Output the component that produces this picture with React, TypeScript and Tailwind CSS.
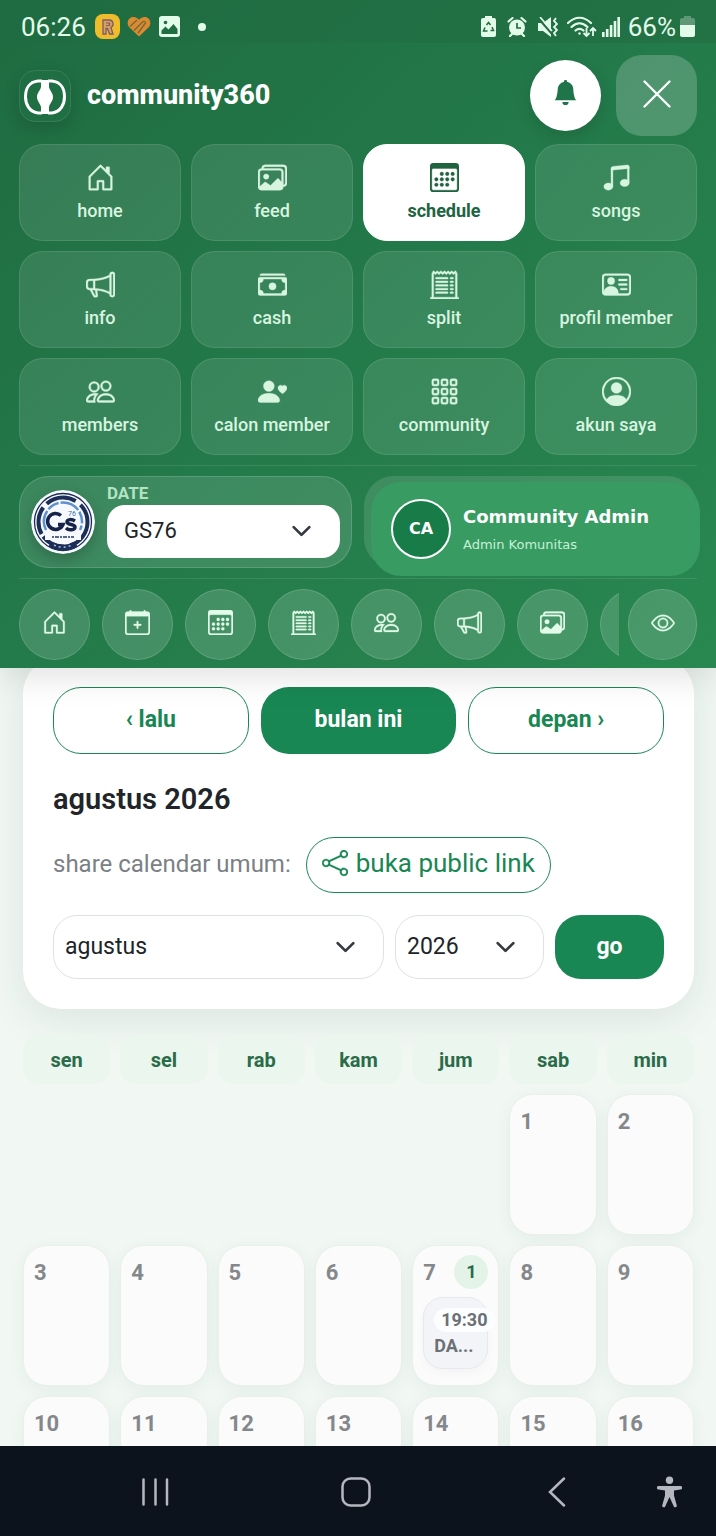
import type { IconType } from 'react-icons'
import {
  BsBellFill,
  BsCalendar3,
  BsCalendarPlus,
  BsCashStack,
  BsChevronDown,
  BsEye,
  BsGrid3X3Gap,
  BsHouseDoor,
  BsImages,
  BsMegaphone,
  BsMusicNoteBeamed,
  BsPeople,
  BsPersonCircle,
  BsPersonHeart,
  BsPersonVcard,
  BsReceiptCutoff,
  BsShare,
} from 'react-icons/bs'

const menu: { label: string; icon: IconType; active?: boolean }[] = [
  { label: 'home', icon: BsHouseDoor },
  { label: 'feed', icon: BsImages },
  { label: 'schedule', icon: BsCalendar3, active: true },
  { label: 'songs', icon: BsMusicNoteBeamed },
  { label: 'info', icon: BsMegaphone },
  { label: 'cash', icon: BsCashStack },
  { label: 'split', icon: BsReceiptCutoff },
  { label: 'profil member', icon: BsPersonVcard },
  { label: 'members', icon: BsPeople },
  { label: 'calon member', icon: BsPersonHeart },
  { label: 'community', icon: BsGrid3X3Gap },
  { label: 'akun saya', icon: BsPersonCircle },
]

const shortcuts: { label: string; icon: IconType | null }[] = [
  { label: 'home', icon: BsHouseDoor },
  { label: 'tambah jadwal', icon: BsCalendarPlus },
  { label: 'schedule', icon: BsCalendar3 },
  { label: 'split', icon: BsReceiptCutoff },
  { label: 'members', icon: BsPeople },
  { label: 'info', icon: BsMegaphone },
  { label: 'feed', icon: BsImages },
  { label: 'lainnya', icon: null },
]

const weekdays = ['sen', 'sel', 'rab', 'kam', 'jum', 'sab', 'min']
const days = Array.from({ length: 16 }, (_, i) => i + 1)
const events: Record<number, { time: string; title: string }[]> = {
  7: [{ time: '19:30', title: 'DA...' }],
}

function StatusBar() {
  return (
    <div className="flex h-[43px] items-center justify-between bg-[#216d42]/60 pl-[21px] pr-[21px] pt-2.5 text-[26px] leading-[30px] text-[#e3fbe9]">
      <div className="flex items-center">
        <span>06:26</span>
        <svg className="ml-[9px] size-[25px]" viewBox="0 0 25 25" aria-hidden="true">
          <rect width="25" height="25" rx="8" fill="#efbd2c" />
          <path
            d="M8 20V6h6.500a4 4 0 0 1 1.500 7.500L18 20h-3.500l-2-5.500H11V20z"
            fill="#d8a05a"
            stroke="#7d5a6b"
            strokeWidth="1.300"
          />
          <path d="M11 9h3.500v2.500H11" fill="none" stroke="#7d5a6b" strokeWidth="1.200" />
        </svg>
        <svg className="ml-[7px] h-[21px] w-6" viewBox="0 0 24 21" aria-hidden="true">
          <path
            d="M12 20.500 2 11C-.5 8 .5 2.500 4.500 1.200 8 .2 10.500 2 12 3.800 13.500 2 16 .2 19.500 1.200 23.500 2.500 24.500 8 22 11z"
            fill="#dc8a32"
          />
          <path d="m3 10.500 7-6.500M7 14.500l8.500-8.500q2.500-1.500 3 1L11 17" fill="none" stroke="#6f6a35" strokeWidth="1.300" />
        </svg>
        <svg className="ml-2 size-[21px]" viewBox="0 0 21 21" aria-hidden="true">
          <rect width="21" height="21" rx="3" fill="#e3fbe9" />
          <circle cx="6.500" cy="6.500" r="1.800" fill="#216d42" />
          <path d="m2.500 14.500 4-4 3 3 5-5.500 4 5v5h-16z" fill="#216d42" />
        </svg>
        <span className="ml-[18px] size-2 rounded-full bg-[#e3fbe9]" />
      </div>

      <div className="flex items-center">
        <svg className="h-[21px] w-[15px]" viewBox="0 0 15 21" aria-hidden="true">
          <path d="M4 2V0h7v2h2a2 2 0 0 1 2 2v15a2 2 0 0 1-2 2H2a2 2 0 0 1-2-2V4a2 2 0 0 1 2-2z" fill="#e3fbe9" />
          <path
            d="m5.500 9 2-2.500 2 2.500M11 11l1.500 3.500H9.500M6.500 15h-4L4 11.500"
            fill="none"
            stroke="#216d42"
            strokeWidth="1.500"
          />
        </svg>
        <svg className="ml-[11px] size-5" viewBox="0 0 20 20" aria-hidden="true">
          <circle cx="10" cy="10.500" r="8" fill="#e3fbe9" />
          <path d="m1.500 4.500 4-3.500m9 0 4 3.500M3 19l2.500-2.500M17 19l-2.500-2.500" stroke="#e3fbe9" strokeWidth="2.200" strokeLinecap="round" />
          <path d="M10 6v5h4" fill="none" stroke="#216d42" strokeWidth="1.700" />
        </svg>
        <svg className="ml-[11px] size-5" viewBox="0 0 20 20" aria-hidden="true">
          <path d="M0 6h5l8-6v20l-8-6H0z" fill="#e3fbe9" />
          <path d="m0 1 14 16" stroke="#216d42" strokeWidth="2" />
          <path d="m2 0 12 14" stroke="#e3fbe9" strokeWidth="1.700" />
          <path d="m18 1-2 3 3 3-3 3 3 3-3 3 2 3" fill="none" stroke="#e3fbe9" strokeWidth="1.800" />
        </svg>
        <svg className="ml-[9px] h-[22px] w-[30px]" viewBox="0 0 30 22" fill="none" stroke="#e3fbe9" strokeWidth="2.200" aria-hidden="true">
          <path d="M1 7c7-7 16-7 23 0M4.500 11c5-5 11-5 16 0M8.500 14.500c3-2.500 5-2.500 8 0" strokeLinecap="round" />
          <circle cx="12.500" cy="17.500" r="1.200" fill="#e3fbe9" stroke="none" />
          <path d="M19.500 12v8m-3-3 3 3 3-3M26 20v-8m-3 3 3-3 3 3" strokeWidth="1.800" />
        </svg>
        <svg className="ml-[5px] h-5 w-[18px]" viewBox="0 0 18 20" fill="#e3fbe9" aria-hidden="true">
          <rect y="15" width="2.600" height="5" />
          <rect x="3.900" y="12" width="2.600" height="8" />
          <rect x="7.800" y="8" width="2.600" height="12" />
          <rect x="11.700" y="4" width="2.600" height="16" />
          <rect x="15.400" width="2.600" height="20" />
        </svg>
        <span className="ml-2">66%</span>
        <svg className="ml-1 h-[21px] w-[15px]" viewBox="0 0 15 21" aria-hidden="true">
          <path d="M4 2V0h7v2h2a2 2 0 0 1 2 2v5H0V4a2 2 0 0 1 2-2z" fill="#5f9876" />
          <path d="M0 9h15v10a2 2 0 0 1-2 2H2a2 2 0 0 1-2-2z" fill="#e3fbe9" />
        </svg>
      </div>
    </div>
  )
}

function BrandMark() {
  return (
    <span className="size-[52px] shrink-0 rounded-2xl border border-white/10 shadow-[0_6px_16px_rgba(0,0,0,0.15)]">
      <svg viewBox="0 0 50 50" fill="none" aria-hidden="true">
        <path d="M22 10h-4C9 11 5.500 18 5.500 25.500S9 41 18 42h4M28 10h4c9 1 12.500 8 12.500 15.500S41 41 32 42h-4" stroke="#fff" strokeWidth="3" />
        <path d="M21 9h8v7c1 4 4 6 4 10s-3 6-4 10v7h-8v-7c-1-4-4-6-4-10s3-6 4-10z" fill="#fff" />
      </svg>
    </span>
  )
}

function GroupBadge() {
  return (
    <svg className="size-16 shrink-0 rounded-full shadow-[0_6px_14px_rgba(0,0,0,0.2)]" viewBox="0 0 64 64" fill="none" role="img" aria-label="GS76">
      <circle cx="32" cy="32" r="32" fill="#f6faff" />
      <circle cx="32" cy="32" r="28.500" stroke="#1d2c52" strokeWidth="1.300" />
      <circle cx="32" cy="32" r="24.500" stroke="#1c2d57" strokeWidth="4" strokeDasharray="31 6 24 3 28 5" />
      <path d="M15 40a19 19 0 1 1 34 0" stroke="#5f91cf" strokeWidth="2.500" strokeDasharray="20 2 12 2" />
      <path d="M30 25.500a8 8 0 1 0 2 9h-5" stroke="#16244a" strokeWidth="3.500" />
      <path d="M44 31c-3-2-8-2-8 1s8 2 8 5-6 4-9 1" stroke="#16244a" strokeWidth="3.500" />
      <text x="37" y="26" fontSize="7" fill="#3e6fae" fontFamily="Roboto, sans-serif">76</text>
      <path d="M14 47h36" stroke="#f6faff" strokeWidth="6" />
      <path d="M21 47h22" stroke="#5b6785" strokeWidth="2" strokeDasharray="2 1 4 1" />
      <path d="M19 54c8 5 18 5 26 0" stroke="#1c2d57" strokeWidth="6" />
      <path d="M23 55c6 3 12 3 18 0" stroke="#a9bddc" strokeWidth="1.500" strokeDasharray="2 3" />
    </svg>
  )
}

function Select({ label, id, value, className }: { label: string; id: string; value: string; className: string }) {
  return (
    <div className="relative">
      <select
        id={id}
        aria-label={label}
        defaultValue={value}
        className={`block w-full appearance-none bg-white text-[#212529] outline-none ${className}`}
      >
        <option>{value}</option>
      </select>
      <BsChevronDown
        className="pointer-events-none absolute right-7 top-1/2 size-[21px] -translate-y-1/2 stroke-1 text-[#343a40]"
        aria-hidden="true"
      />
    </div>
  )
}

function Header() {
  return (
    <header className="relative z-10 bg-linear-to-br from-[#1f6b41] via-[#237a4a] to-[#298850] shadow-[0_8px_32px_rgba(0,0,0,0.12)]">
      <StatusBar />

      <div className="px-[19px] pb-2 pt-3">
        <div className="flex items-center">
          <BrandMark />
          <span className="ml-4 pb-0.5 text-[27px] font-extrabold leading-8 text-white">community360</span>
          <button
            type="button"
            aria-label="notifikasi"
            className="ml-auto flex size-[71px] items-center justify-center rounded-full bg-white pb-1.5 text-[#20744a] shadow-[0_6px_16px_rgba(0,0,0,0.12)]"
          >
            <BsBellFill className="size-[25px]" />
          </button>
          <button
            type="button"
            aria-label="tutup menu"
            className="ml-[15px] flex size-[81px] items-center justify-center rounded-[26px] bg-white/20 pb-1 text-white"
          >
            <svg className="size-7" viewBox="0 0 28 28" stroke="currentColor" strokeWidth="2.300" strokeLinecap="round" aria-hidden="true">
              <path d="m1.500 1.500 25 25m0-25-25 25" />
            </svg>
          </button>
        </div>

        <nav className="mt-2 grid grid-cols-4 gap-2.5">
          {menu.map(({ label, icon: Icon, active }) => (
            <a
              key={label}
              href={`#${label.replace(' ', '-')}`}
              className={`flex h-[97px] flex-col items-center justify-center gap-[7px] rounded-3xl border text-lg leading-6 ${
                active
                  ? 'border-white bg-white font-bold text-[#20633f]'
                  : 'border-white/10 bg-white/10 font-medium text-[#d8f5e0]'
              }`}
            >
              <Icon className="size-[29px] stroke-[0.2]" />
              {label}
            </a>
          ))}
        </nav>

        <div className="mt-2.5 grid grid-cols-2 gap-3 border-y border-white/10 py-2.5">
          <div className="flex h-[92px] items-center rounded-[30px] border border-white/15 bg-white/12 px-[11px]">
            <GroupBadge />
            <div className="ml-3 flex-1 pb-1">
              <label htmlFor="group" className="block text-[17px] font-bold leading-5 text-[#b4e3c2]">
                DATE
              </label>
              <Select
                id="group"
                label="DATE"
                value="GS76"
                className="mt-0.5 h-[53px] rounded-[18px] px-[17px] pb-0.5 text-[22px]"
              />
            </div>
          </div>

          <div className="relative rounded-[30px] bg-white/12">
            <div className="absolute -bottom-2 -right-[3px] left-[7px] top-1.5 flex items-center rounded-[30px] bg-[#379b62] pl-5 font-['DejaVu_Sans',sans-serif]">
              <span className="flex size-[60px] shrink-0 items-center justify-center rounded-full border-2 border-white bg-[#187c49] text-base font-bold text-white">
                CA
              </span>
              <div className="ml-3 pt-1">
                <p className="text-lg font-bold leading-7 text-white">Community Admin</p>
                <p className="text-[13px] leading-7 text-[#c8f0d6]">Admin Komunitas</p>
              </div>
            </div>
          </div>
        </div>

        <div className="mt-2.5 flex items-center gap-[9px]">
          <div className="flex flex-1 gap-3 overflow-hidden">
            {shortcuts.map(({ label, icon: Icon }) => (
              <button
                key={label}
                type="button"
                aria-label={label}
                className="flex size-[71px] shrink-0 items-center justify-center rounded-full border border-white/15 bg-white/15 pb-1 text-[#e3fbe9]"
              >
                {Icon && <Icon className="size-[25px] stroke-[0.2]" />}
              </button>
            ))}
          </div>
          <button
            type="button"
            aria-label="tampilan"
            className="flex h-[71px] w-[69px] shrink-0 items-center justify-center rounded-full border border-white/15 bg-white/15 pb-1 text-[#e3fbe9]"
          >
            <BsEye className="size-6 stroke-[0.2]" />
          </button>
        </div>
      </div>
    </header>
  )
}

function MonthCard() {
  return (
    <section className="-mt-3 rounded-[38px] bg-white p-[30px] pt-[31px] shadow-[0_10px_40px_rgba(30,60,40,0.1)]">
      <div className="grid grid-cols-3 gap-3 text-[23px] font-bold">
        <button type="button" className="h-[67px] rounded-[28px] border border-[#198754] text-[#198754]">
          ‹ lalu
        </button>
        <button type="button" className="h-[67px] rounded-[28px] bg-[#198754] text-white">
          bulan ini
        </button>
        <button type="button" className="h-[67px] rounded-[28px] border border-[#198754] text-[#198754]">
          depan ›
        </button>
      </div>

      <h1 className="mt-[27px] text-[29px] font-semibold leading-9 text-[#212529]">agustus 2026</h1>

      <div className="mt-5 flex items-center gap-[15px]">
        <span className="pb-0.5 text-2xl text-[#7b8085]">share calendar umum:</span>
        <a
          href="#public"
          className="flex h-14 items-center gap-2 rounded-full border border-[#198754] px-[15px] pb-1 text-[26px] text-[#198754]"
        >
          <BsShare className="size-[26px] stroke-[0.2]" />
          buka public link
        </a>
      </div>

      <form className="mt-[22px] grid grid-cols-[1fr_149px_109px] gap-[11px]">
        <Select
          id="month"
          label="bulan"
          value="agustus"
          className="h-16 rounded-3xl border border-[#dee2e6] px-[11px] text-[23px]"
        />
        <Select
          id="year"
          label="tahun"
          value="2026"
          className="h-16 rounded-3xl border border-[#dee2e6] px-[11px] text-[23px]"
        />
        <button type="button" className="h-16 rounded-[26px] bg-[#198754] text-[23px] font-bold text-white">
          go
        </button>
      </form>
    </section>
  )
}

function DayCell({ day }: { day: number }) {
  const items = events[day] ?? []

  return (
    <div
      className={`h-[141px] rounded-3xl border border-[#e9f0eb] bg-[#fbfbfb] px-2.5 pt-[9px] shadow-[0_4px_16px_rgba(30,60,40,0.06)] ${
        day === 1 ? 'col-start-6' : ''
      }`}
    >
      <div className="flex h-[34px] items-center justify-between text-[22px] font-bold text-[#85888b]">
        {day}
        {items.length > 0 && (
          <span className="flex size-[34px] items-center justify-center rounded-full bg-[#e4f3e8] text-lg text-[#276b48]">
            {items.length}
          </span>
        )}
      </div>
      {items.map(({ time, title }) => (
        <div
          key={time}
          className="mt-2 h-[72px] rounded-[20px] border border-[#e6e9ed] bg-[#f3f4f7] pl-2.5 pt-2.5 font-bold text-[#6b7076] shadow-[0_4px_10px_rgba(0,0,0,0.03)]"
        >
          <span className="block h-6 w-[61px] rounded-full bg-[#fcfdfe] px-[7px] text-lg leading-6">{time}</span>
          <span className="block text-lg leading-7">{title}</span>
        </div>
      ))}
    </div>
  )
}

function Calendar() {
  return (
    <section className="mt-[26px] grid grid-cols-7 gap-2.5">
      {weekdays.map((name) => (
        <div
          key={name}
          className="flex h-[49px] items-center justify-center rounded-2xl bg-[#ebf6ee] text-xl font-bold text-[#2a6b49]"
        >
          {name}
        </div>
      ))}
      {days.map((day) => (
        <DayCell key={day} day={day} />
      ))}
    </section>
  )
}

function SystemNav() {
  return (
    <footer className="relative z-10 flex h-[90px] shrink-0 items-center bg-[#0d131c] pl-[55px] pr-[34px] pt-0.5 text-[#b5b7c0]">
      <div className="grid flex-1 grid-cols-3 justify-items-center">
        <button type="button" aria-label="recent apps">
          <svg className="h-7 w-[27px]" viewBox="0 0 27 28" stroke="currentColor" strokeWidth="2.500" strokeLinecap="round" aria-hidden="true">
            <path d="M1.500 1.500v25M13.500 1.500v25M25 1.500v25" />
          </svg>
        </button>
        <button type="button" aria-label="home screen">
          <svg className="size-[30px]" viewBox="0 0 30 30" fill="none" stroke="currentColor" strokeWidth="2.500" aria-hidden="true">
            <rect x="1.500" y="1.500" width="27" height="27" rx="8" />
          </svg>
        </button>
        <button type="button" aria-label="back">
          <svg className="h-[30px] w-[18px]" viewBox="0 0 18 30" fill="none" stroke="currentColor" strokeWidth="2.500" strokeLinecap="round" aria-hidden="true">
            <path d="M16 1.500 2 15l14 13.500" />
          </svg>
        </button>
      </div>
      <button type="button" aria-label="accessibility">
        <svg className="h-8 w-[25px]" viewBox="0 0 25 32" fill="currentColor" aria-hidden="true">
          <circle cx="12.500" cy="4.200" r="3.700" />
          <path d="M1.500 10h22a1.700 1.700 0 0 1 0 3.500L17 14.500v5l2.800 10a1.600 1.600 0 0 1-3 .9L12.500 21 8.200 30.400a1.600 1.600 0 0 1-3-.9L8 19.500v-5l-6.500-1a1.700 1.700 0 0 1 0-3.500z" />
        </svg>
      </button>
    </footer>
  )
}

export default function App() {
  return (
    <div className="flex h-screen flex-col overflow-hidden bg-[#f1f8f4] font-[Roboto,sans-serif]">
      <Header />
      <main className="min-h-0 flex-1 pl-[23px] pr-[22px]">
        <MonthCard />
        <Calendar />
      </main>
      <SystemNav />
    </div>
  )
}
